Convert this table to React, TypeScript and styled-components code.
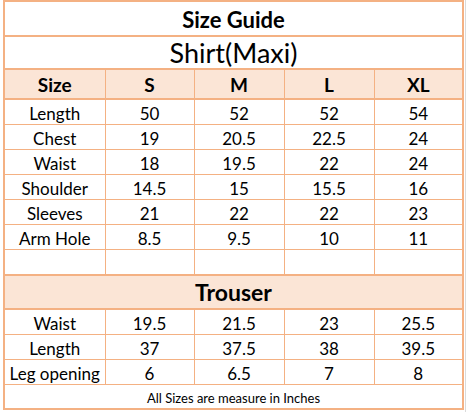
import styled, { createGlobalStyle } from "styled-components";

const GlobalStyle = createGlobalStyle`
  html, body {
    margin: 0;
    padding: 0;
    background: #ffffff;
  }
  body {
    font-family: Lato, "Liberation Sans", sans-serif;
    color: #000000;
  }
`;

const Sheet = styled.div`
  width: 466px;
  height: 412px;
  padding: 0 2px 0 3px;
  box-sizing: border-box;
  border-right: 1px solid #dadada;
  overflow: hidden;
`;

const Table = styled.table`
  border-collapse: collapse;
  table-layout: fixed;
  width: 459px;
  border: 2px solid #f4b183;
`;

const TitleCell = styled.td<{ big?: boolean }>`
  height: ${(props) => (props.big ? "31px" : "31px")};
  padding: ${(props) => (props.big ? "0" : "2px 0 0")};
  text-align: center;
  border-bottom: 2px solid #f4b183;
  font-size: ${(props) => (props.big ? "27px" : "22px")};
  font-weight: ${(props) => (props.big ? 400 : 700)};
  line-height: 1;
`;

const HeadCell = styled.th`
  height: 28px;
  padding: 0;
  background: #fbe5d6;
  border: 1px solid #f4b183;
  border-top: 2px solid #f4b183;
  border-bottom: 2px solid #f4b183;
  font-size: 19px;
  font-weight: 700;
  text-align: center;
`;

const SectionCell = styled.td`
  height: 32px;
  padding: 0;
  background: #fbe5d6;
  border-top: 2px solid #f4b183;
  border-bottom: 2px solid #f4b183;
  font-size: 23px;
  font-weight: 700;
  text-align: center;
`;

const Cell = styled.td`
  height: 22px;
  padding: 2px 0 0;
  border: 1px solid #f4b183;
  font-size: 17px;
  text-align: center;
  white-space: nowrap;
`;

const NoteCell = styled.td`
  height: 21px;
  padding: 2px 0 0;
  border: 1px solid #f4b183;
  font-size: 13px;
  text-align: center;
`;

const sizes = ["S", "M", "L", "XL"];

const shirtRows: [string, string[]][] = [
  ["Length", ["50", "52", "52", "54"]],
  ["Chest", ["19", "20.5", "22.5", "24"]],
  ["Waist", ["18", "19.5", "22", "24"]],
  ["Shoulder", ["14.5", "15", "15.5", "16"]],
  ["Sleeves", ["21", "22", "22", "23"]],
  ["Arm Hole", ["8.5", "9.5", "10", "11"]],
  ["", ["", "", "", ""]],
];

const trouserRows: [string, string[]][] = [
  ["Waist", ["19.5", "21.5", "23", "25.5"]],
  ["Length", ["37", "37.5", "38", "39.5"]],
  ["Leg opening", ["6", "6.5", "7", "8"]],
];

const MeasureRow = ({ label, values }: { label: string; values: string[] }) => (
  <tr>
    <Cell>{label}</Cell>
    {values.map((v, i) => (
      <Cell key={i}>{v}</Cell>
    ))}
  </tr>
);

export default function App() {
  return (
    <>
      <GlobalStyle />
      <Sheet>
        <Table>
          <colgroup>
            <col style={{ width: 101 }} />
            <col style={{ width: 89 }} />
            <col style={{ width: 90 }} />
            <col style={{ width: 90 }} />
            <col style={{ width: 89 }} />
          </colgroup>
          <tbody>
            <tr>
              <TitleCell colSpan={5}>Size Guide</TitleCell>
            </tr>
            <tr>
              <TitleCell colSpan={5} big>
                Shirt(Maxi)
              </TitleCell>
            </tr>
            <tr>
              <HeadCell>Size</HeadCell>
              {sizes.map((s) => (
                <HeadCell key={s}>{s}</HeadCell>
              ))}
            </tr>
            {shirtRows.map(([label, values], i) => (
              <MeasureRow key={i} label={label} values={values} />
            ))}
            <tr>
              <SectionCell colSpan={5}>Trouser</SectionCell>
            </tr>
            {trouserRows.map(([label, values], i) => (
              <MeasureRow key={i} label={label} values={values} />
            ))}
            <tr>
              <NoteCell colSpan={5}>All Sizes are measure in Inches</NoteCell>
            </tr>
          </tbody>
        </Table>
      </Sheet>
    </>
  );
}
